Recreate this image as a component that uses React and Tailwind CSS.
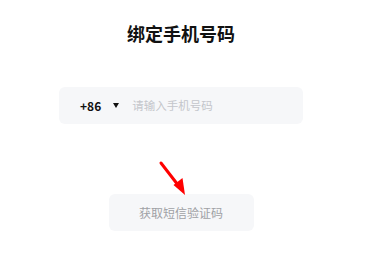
export default function App() {
  const font = { fontFamily: '"Noto Sans CJK SC", "Noto Sans", sans-serif' };
  return (
    <div className="relative w-[371px] h-[258px] bg-white overflow-hidden" style={font}>
      <div className="w-[362px] flex flex-col items-center">
        <div className="mt-[20px] h-[26px] leading-[26px] text-[18px] font-bold text-[#111]">绑定手机号码</div>
        <div className="mt-[41px] w-[244px] h-[37px] rounded-[6px] bg-[#f6f7f9] flex items-center pl-[21px]">
          <span className="text-[12px] font-bold text-[#111] leading-none">+86</span>
          <span className="ml-[12px] w-0 h-0 border-l-[3px] border-r-[3px] border-t-[5px] border-l-transparent border-r-transparent border-t-[#111]"></span>
          <span className="ml-[13px] text-[11.5px] text-[#c4c6cb] leading-none">请输入手机号码</span>
        </div>
        <div className="mt-[70px] w-[145px] h-[37px] rounded-[6px] bg-[#f6f7f9] flex items-center justify-center">
          <span className="text-[12px] text-[#9fa1a5] leading-none">获取短信验证码</span>
        </div>
      </div>
      <svg className="absolute left-0 top-0" width="371" height="258" viewBox="0 0 371 258">
        <line x1="161" y1="163" x2="178" y2="185" stroke="#f00" strokeWidth="3" strokeLinecap="round" />
        <polygon points="185,195 173.5,185 182.5,178" fill="#f00" />
      </svg>
    </div>
  );
}
